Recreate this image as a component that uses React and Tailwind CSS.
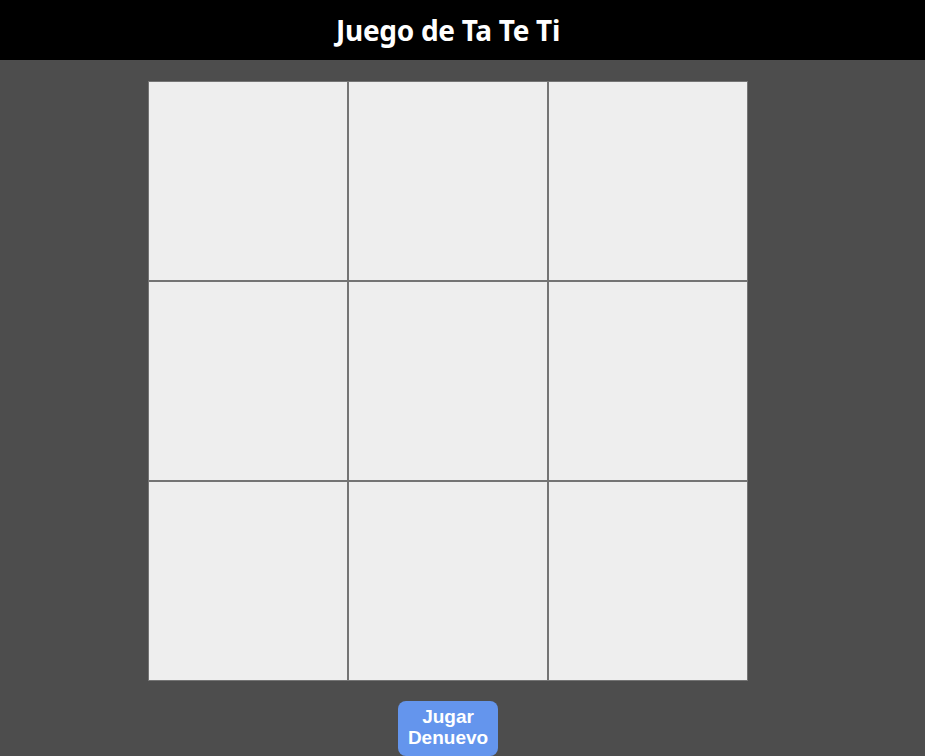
import React, { useState } from "react";

// Tic-tac-toe board: 3x3 grid of 200px cells
export default function App() {
  const [cells, setCells] = useState(Array(9).fill(""));

  const reset = () => setCells(Array(9).fill(""));

  return (
    <div className="min-h-screen bg-[#4d4d4d]" style={{ fontFamily: "'Liberation Sans', Arial, sans-serif" }}>
      <header className="h-[60px] bg-black flex items-center justify-center pr-[29px]">
        <h1 className="text-white font-bold text-[28px] font-['Noto_Sans',sans-serif] tracking-[-0.3px]">
          Juego de Ta Te Ti
        </h1>
      </header>

      <main className="flex flex-col items-center pr-[29px] pt-[21px]">
        <div className="grid grid-cols-3">
          {cells.map((v, i) => (
            <div
              key={i}
              className="w-[200px] h-[200px] bg-[#eeeeee] border border-[#747474] flex items-center justify-center text-6xl font-bold"
            >
              {v}
            </div>
          ))}
        </div>

        <button
          onClick={reset}
          className="mt-[20px] w-[100px] pt-[5px] pb-[8px] bg-[#6495ed] text-white font-bold text-[19px] leading-[21px] rounded-lg"
        >
          Jugar Denuevo
        </button>
      </main>
    </div>
  );
}
